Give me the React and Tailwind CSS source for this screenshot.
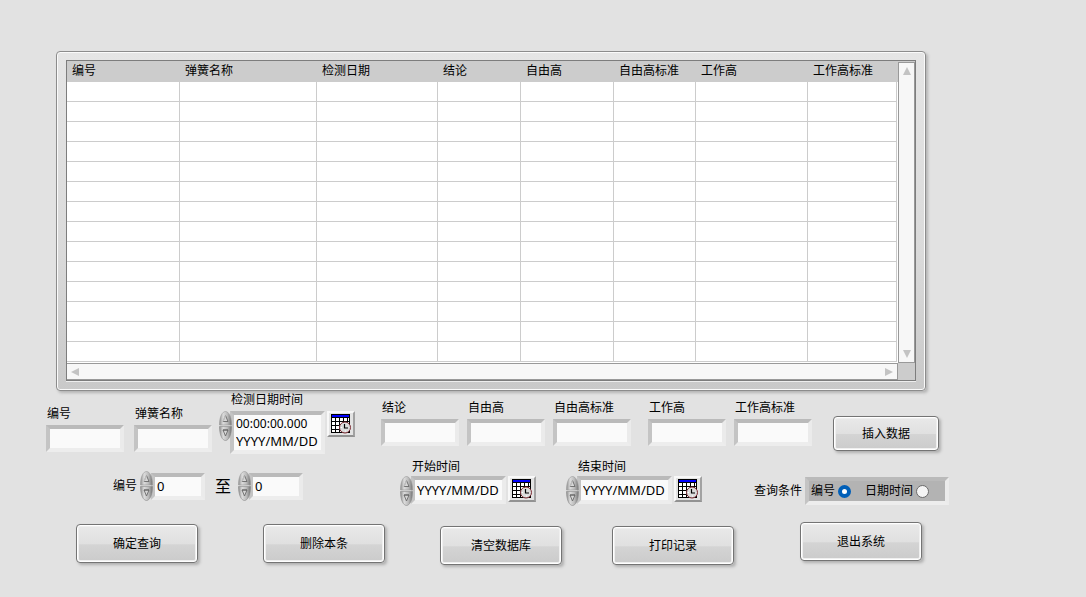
import React, { useState } from 'react'

const columns = [
  { name: '编号', width: 'w-[113px]' },
  { name: '弹簧名称', width: 'w-[137px]' },
  { name: '检测日期', width: 'w-[121px]' },
  { name: '结论', width: 'w-[83px]' },
  { name: '自由高', width: 'w-[93px]' },
  { name: '自由高标准', width: 'w-[82px]' },
  { name: '工作高', width: 'w-[112px]' },
  { name: '工作高标准', width: 'w-[89px]' },
]

const rows = Array.from({ length: 14 })

const bevel = 'border-4 border-t-[#bababa] border-l-[#c4c4c4] border-r-[#ebebeb] border-b-[#ededed]'

const ScrollArrow = ({ label, points }) => (
  <button type="button" aria-label={label} className="flex items-center justify-center w-4 h-4 shrink-0">
    <svg width="8" height="8" viewBox="0 0 8 8" fill="#c3c3c3">
      <polygon points={points} />
    </svg>
  </button>
)

const Button = ({ children, size = 'w-[122px] h-[39px]' }) => (
  <button
    type="button"
    className={`${size} shrink-0 rounded-[4px] border border-[#747474] bg-[linear-gradient(#e9e9e9,#e0e0e0_52%,#d4d4d4_53%,#cbcbcb)] shadow-[inset_0_0_0_1px_#ffffff,inset_0_0_0_2px_#efefef,2px_2px_3px_#b0b0b0] active:brightness-95`}
  >
    {children}
  </button>
)

const Field = ({ id, label }) => (
  <div className="flex flex-col gap-[3px]">
    <label htmlFor={id} className="pl-px leading-4 whitespace-nowrap">{label}</label>
    <input id={id} type="text" className={`w-[78px] h-[27px] bg-[#fafafa] px-1 outline-none ${bevel}`} />
  </div>
)

// oval increment / decrement control, one button per half
const Spinner = ({ onUp, onDown }) => (
  <div className="relative flex flex-col w-[13px] -mr-0.5 shrink-0">
    <button type="button" aria-label="增加" onClick={onUp}>
      <svg className="block" width="13" height="15" viewBox="0 0 13 15">
        <defs>
          <linearGradient id="spin">
            <stop offset="0" stopColor="#8f8f8f" />
            <stop offset="0.3" stopColor="#dcdcdc" />
            <stop offset="0.65" stopColor="#bcbcbc" />
            <stop offset="1" stopColor="#777777" />
          </linearGradient>
        </defs>
        <path d="M0.5 14C0.5 5 3.5 0.5 6.5 0.5S12.5 5 12.5 14Z" fill="url(#spin)" stroke="#999999" strokeWidth="0.6" />
        <path d="M6.5 4.5L9 10.5H4Z" fill="#d6d6d6" stroke="#696969" strokeWidth="0.9" />
        <path d="M4 10.5L6.5 4.5" stroke="#f7f7f7" strokeWidth="0.6" />
      </svg>
    </button>
    <button type="button" aria-label="减少" onClick={onDown}>
      <svg className="block" width="13" height="15" viewBox="0 0 13 15">
        <path d="M0.5 0.5C0.5 9.5 3.5 14.5 6.5 14.5S12.5 9.5 12.5 0.5Z" fill="url(#spin)" stroke="#888888" strokeWidth="0.6" />
        <path d="M6.5 10L9 4H4Z" fill="#d6d6d6" stroke="#696969" strokeWidth="0.9" />
        <path d="M4 4H9" stroke="#555555" strokeWidth="0.8" />
      </svg>
    </button>
  </div>
)

const CalendarButton = () => (
  <button
    type="button"
    aria-label="选择日期"
    className="flex items-center justify-center w-7 h-[26px] shrink-0 bg-[#e3e3e3] border-2 border-t-[#f8f8f8] border-l-[#f8f8f8] border-r-[#a2a2a2] border-b-[#929292]"
  >
    <svg width="20" height="20" viewBox="0 0 20 20">
      <g shapeRendering="crispEdges">
        <rect x="0" y="0" width="19" height="19" fill="#000000" />
        <rect x="1" y="1" width="17" height="2" fill="#0000ff" />
        {[4, 8, 12, 16].map((y) =>
          [1, 5, 9, 13, 17].map((x) => (
            <rect key={`${x}-${y}`} x={x} y={y} width={x > 16 ? 1 : 3} height={y > 12 ? 2 : 3} fill="#ffffff" />
          ))
        )}
      </g>
      <circle cx="14" cy="13.5" r="5.5" fill="#dcdcdc" stroke="#7a2830" strokeWidth="1" />
      <path d="M13.5 10V14H17" fill="none" stroke="#000000" strokeWidth="1.2" />
      <path d="M10 13.5h1M14 17h1" stroke="#ffffff" strokeWidth="1" />
    </svg>
  </button>
)

const DateField = ({ id, label, withTime }) => (
  <div className={`grid grid-cols-[11px_95px_auto] grid-rows-[16px_auto] items-start ${withTime ? 'gap-y-[3px]' : 'gap-y-px'}`}>
    <label htmlFor={id} className="col-start-2 pl-px leading-4 whitespace-nowrap">{label}</label>
    <div className="row-start-2 relative z-10">
      <Spinner />
    </div>
    <div className={`row-start-2 bg-[#fafafa] ${bevel}`}>
      {withTime && (
        <input
          aria-label="时间"
          defaultValue="00:00:00.000"
          className="block w-full h-[18px] pl-0.5 text-[12px] outline-none"
        />
      )}
      <input
        id={id}
        defaultValue="YYYY/MM/DD"
        className={`block w-full pl-0.5 text-[13px] outline-none ${withTime ? 'h-[17px]' : 'h-5'}`}
      />
    </div>
    <div className="row-start-2 ml-0.5">
      <CalendarButton />
    </div>
  </div>
)

const NumberField = ({ id, label, labelClass }) => {
  const [value, setValue] = useState(0)
  return (
    <div className="flex items-center">
      <label htmlFor={id} className={labelClass}>{label}</label>
      <Spinner onUp={() => setValue(value + 1)} onDown={() => setValue(value - 1)} />
      <input
        id={id}
        type="text"
        value={value}
        onChange={(e) => setValue(Number(e.target.value) || 0)}
        className={`w-[54px] h-[27px] bg-[#fafafa] pl-0.5 text-[13px] outline-none ${bevel}`}
      />
    </div>
  )
}

const Radio = ({ id, checked, onChange }) => (
  <input
    id={id}
    type="radio"
    name="condition"
    checked={checked}
    onChange={onChange}
    className="appearance-none w-[13px] h-[13px] shrink-0 rounded-full border border-[#6b6b6b] bg-[#f4f4f4] checked:border-4 checked:border-[#005fb8] checked:bg-white"
  />
)

const RecordTable = () => (
  <div className="ml-14 mr-40 rounded-[4px] border border-[#8c8c8c] bg-[linear-gradient(#e5e5e5,#dadada_60%,#c9c9c9)] px-[9px] pt-2 pb-[9px] shadow-[inset_0_0_0_1px_#fafafa,2px_2px_3px_#b4b4b4]">
    <div className="grid grid-cols-[1fr_17px] border border-[#7d7d7d] bg-[#cccccc] shadow-[0_1px_0_#eeeeee]">
      <div className="bg-white pb-px pr-px">
        <table className="w-full table-fixed border-separate border-spacing-0">
          <thead>
            <tr className="h-[21px] bg-[#cccccc] shadow-[1px_0_0_#cccccc]">
              {columns.map((col) => (
                <th key={col.name} className={`${col.width} p-0 pb-0.5 pl-[5px] text-left font-normal leading-4 whitespace-nowrap`}>
                  {col.name}
                </th>
              ))}
            </tr>
          </thead>
          <tbody>
            {rows.map((_, i) => (
              <tr key={i} className="h-5">
                {columns.map((col) => (
                  <td key={col.name} className="p-0 border-r border-b border-[#cccccc]"></td>
                ))}
              </tr>
            ))}
          </tbody>
        </table>
      </div>
      <div className="mt-px flex flex-col justify-between items-center bg-[#f7f7f7] border border-[#999999]">
        <ScrollArrow label="向上" points="4,0 8,8 0,8" />
        <ScrollArrow label="向下" points="0,0 8,0 4,8" />
      </div>
      <div className="h-[17px] flex justify-between items-center bg-[#f7f7f7] border border-l-0 border-[#999999]">
        <ScrollArrow label="向左" points="0,4 8,0 8,8" />
        <ScrollArrow label="向右" points="0,0 8,4 0,8" />
      </div>
    </div>
  </div>
)

const App = () => {
  const [condition, setCondition] = useState('id')

  return (
    <div className="min-h-screen bg-[#e2e2e2] pt-[51px] text-[12px] text-black font-['Noto_Sans','Noto_Sans_CJK_SC',sans-serif]">
      <RecordTable />

      {/* new record */}
      <form className="flex items-start pl-[46px] pt-px">
        <div className="flex gap-2.5 mt-3.5">
          <Field id="no" label="编号" />
          <Field id="spring" label="弹簧名称" />
        </div>
        <div className="ml-[7px]">
          <DateField id="checked-at" label="检测日期时间" withTime />
        </div>
        <div className="flex gap-2 mt-2 ml-[26px]">
          <Field id="result" label="结论" />
          <Field id="free" label="自由高" />
          <Field id="free-std" label="自由高标准" />
        </div>
        <div className="flex gap-2 mt-2 ml-[17px]">
          <Field id="work" label="工作高" />
          <Field id="work-std" label="工作高标准" />
        </div>
        <div className="mt-6 ml-[21px]">
          <Button size="w-[106px] h-[35px]">插入数据</Button>
        </div>
      </form>

      {/* query filters */}
      <form className="flex items-start pl-[113px] pt-[5px]">
        <div className="flex items-center gap-2.5 mt-3">
          <NumberField id="from" label="编号" labelClass="mr-[3px]" />
          <NumberField id="to" label="至" labelClass="text-[16px] leading-5 mr-[7px]" />
        </div>
        <div className="flex gap-[30px] ml-[97px]">
          <DateField id="start" label="开始时间" />
          <DateField id="end" label="结束时间" />
        </div>
        <fieldset className="flex items-center gap-[3px] mt-[18px] ml-[52px]">
          <span className="whitespace-nowrap">查询条件</span>
          <div className={`flex items-center w-36 h-7 bg-[#b3b3b3] pl-0.5 ${bevel}`}>
            <label htmlFor="by-id" className="mr-[3px]">编号</label>
            <Radio id="by-id" checked={condition === 'id'} onChange={() => setCondition('id')} />
            <label htmlFor="by-date" className="ml-3.5 mr-[3px] whitespace-nowrap">日期时间</label>
            <Radio id="by-date" checked={condition === 'date'} onChange={() => setCondition('date')} />
          </div>
        </fieldset>
      </form>

      <div className="flex items-start pl-[76px] pt-4 pb-6">
        <div className="flex gap-[65px] pt-0.5">
          <Button>确定查询</Button>
          <Button>删除本条</Button>
        </div>
        <div className="flex gap-[50px] pt-1 ml-[55px]">
          <Button>清空数据库</Button>
          <Button>打印记录</Button>
        </div>
        <div className="ml-[66px]">
          <Button>退出系统</Button>
        </div>
      </div>
    </div>
  )
}

export default App
